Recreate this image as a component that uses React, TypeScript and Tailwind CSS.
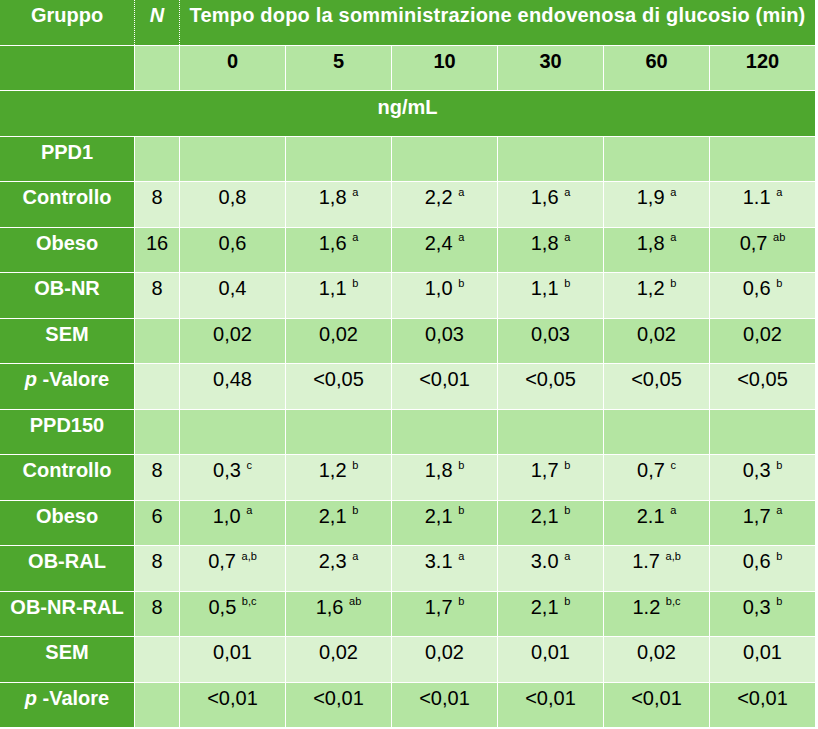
import React from 'react';

type Val = string | [string, string];

type Row = {
  label: React.ReactNode;
  bg: 'med' | 'pale';
  n?: string;
  vals?: Val[];
};

const rows: Row[] = [
  { label: 'PPD1', bg: 'med' },
  { label: 'Controllo', bg: 'pale', n: '8', vals: ['0,8', ['1,8', 'a'], ['2,2', 'a'], ['1,6', 'a'], ['1,9', 'a'], ['1.1', 'a']] },
  { label: 'Obeso', bg: 'med', n: '16', vals: ['0,6', ['1,6', 'a'], ['2,4', 'a'], ['1,8', 'a'], ['1,8', 'a'], ['0,7', 'ab']] },
  { label: 'OB-NR', bg: 'pale', n: '8', vals: ['0,4', ['1,1', 'b'], ['1,0', 'b'], ['1,1', 'b'], ['1,2', 'b'], ['0,6', 'b']] },
  { label: 'SEM', bg: 'med', n: '', vals: ['0,02', '0,02', '0,03', '0,03', '0,02', '0,02'] },
  {
    label: (
      <>
        <span className="italic">p</span> -Valore
      </>
    ),
    bg: 'pale',
    n: '',
    vals: ['0,48', '<0,05', '<0,01', '<0,05', '<0,05', '<0,05'],
  },
  { label: 'PPD150', bg: 'med' },
  { label: 'Controllo', bg: 'pale', n: '8', vals: [['0,3', 'c'], ['1,2', 'b'], ['1,8', 'b'], ['1,7', 'b'], ['0,7', 'c'], ['0,3', 'b']] },
  { label: 'Obeso', bg: 'med', n: '6', vals: [['1,0', 'a'], ['2,1', 'b'], ['2,1', 'b'], ['2,1', 'b'], ['2.1', 'a'], ['1,7', 'a']] },
  { label: 'OB-RAL', bg: 'pale', n: '8', vals: [['0,7', 'a,b'], ['2,3', 'a'], ['3.1', 'a'], ['3.0', 'a'], ['1.7', 'a,b'], ['0,6', 'b']] },
  { label: 'OB-NR-RAL', bg: 'med', n: '8', vals: [['0,5', 'b,c'], ['1,6', 'ab'], ['1,7', 'b'], ['2,1', 'b'], ['1.2', 'b,c'], ['0,3', 'b']] },
  { label: 'SEM', bg: 'pale', n: '', vals: ['0,01', '0,02', '0,02', '0,01', '0,02', '0,01'] },
  {
    label: (
      <>
        <span className="italic">p</span> -Valore
      </>
    ),
    bg: 'med',
    n: '',
    vals: ['<0,01', '<0,01', '<0,01', '<0,01', '<0,01', '<0,01'],
  },
];

function ValueText({ v }: { v: Val }) {
  if (typeof v === 'string') return <>{v}</>;
  return (
    <>
      {v[0]}{' '}
      <sup className="text-[11px] -top-[0.75em]">{v[1]}</sup>
    </>
  );
}

export default function App() {
  return (
    <div className="min-h-[729px] bg-white font-['Liberation_Sans',Arial,sans-serif]">
      <div className="grid w-[815px] grid-cols-[134px_44px_repeat(6,105px)] auto-rows-[44.5px] gap-px bg-white">
        {/* header row 1 */}
        <div className="col-span-8 grid grid-cols-[134px_45px_1fr] bg-[#4ea72e] text-[20px] font-bold leading-[20px] text-white">
          <div className="pt-[5px] text-center">Gruppo</div>
          <div className="border-l border-dotted border-white pt-[5px] text-center italic">N</div>
          <div className="border-l border-dotted border-white pt-[5px] text-center tracking-[0.2px]">
            Tempo dopo la somministrazione endovenosa di glucosio (min)
          </div>
        </div>

        {/* header row 2 */}
        <div className="bg-[#4ea72e]" />
        <div className="bg-[#b4e5a2]" />
        {['0', '5', '10', '30', '60', '120'].map((t) => (
          <div key={t} className="bg-[#b4e5a2] pt-[5px] text-center text-[20px] font-bold leading-[20px] text-black">
            {t}
          </div>
        ))}

        {/* units row */}
        <div className="col-span-8 bg-[#4ea72e] pt-[6px] text-center text-[20px] font-bold leading-[20px] text-white">
          ng/mL
        </div>

        {rows.map((r, i) => {
          const bg = r.bg === 'med' ? 'bg-[#b4e5a2]' : 'bg-[#daf2d0]';
          return (
            <React.Fragment key={i}>
              <div className="bg-[#4ea72e] pt-[5px] text-center text-[20px] font-bold leading-[20px] text-white">
                {r.label}
              </div>
              <div className={`${bg} pt-[5px] text-center text-[20px] leading-[20px] text-black`}>{r.n ?? ''}</div>
              {Array.from({ length: 6 }).map((_, j) => (
                <div key={j} className={`${bg} pt-[5px] text-center text-[20px] leading-[20px] text-black`}>
                  {r.vals ? <ValueText v={r.vals[j]} /> : null}
                </div>
              ))}
            </React.Fragment>
          );
        })}
      </div>
    </div>
  );
}
